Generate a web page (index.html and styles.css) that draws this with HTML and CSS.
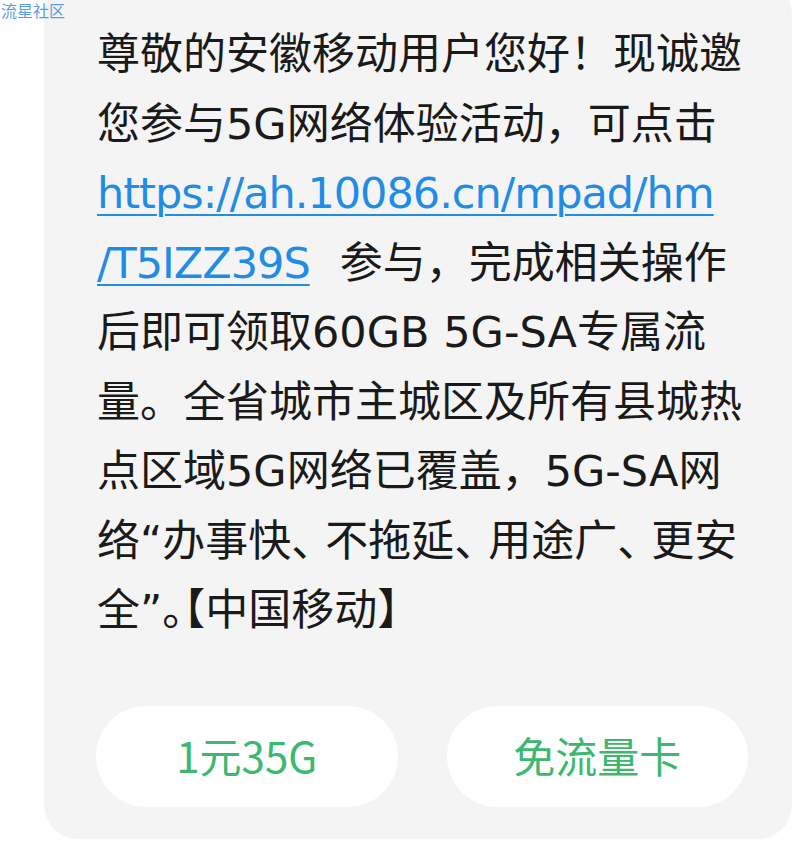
FILE: index.html
```html
<!DOCTYPE html>
<html lang="zh-CN">
<head>
    <meta charset="UTF-8">
    <meta name="viewport" content="width=device-width, initial-scale=1.0">
    <title>短信</title>
    <link rel="stylesheet" href="styles.css">
</head>
<body>

<div class="watermark">流星社区</div>

<div class="bubble">
    <p class="sms-text">
        尊敬的安徽移动用户您好！现诚邀<br>
        您参与5G网络体验活动，可点击<br>
        <a href="#" class="sms-link">https://ah.10086.cn/mpad/hm</a><br>
        <a href="#" class="sms-link">/T5IZZ39S</a><span class="link-gap"></span>参与，完成相关操作<br>
        后即可领取60GB 5G-SA专属流<br>
        量。全省城市主城区及所有县城热<br>
        点区域5G网络已覆盖，5G-SA网<br>
        络“办事快<span class="pause">、</span>不拖延<span class="pause">、</span>用途广<span class="pause">、</span>更安<br>
        全”<span class="half">。【</span>中国移动】
    </p>

    <div class="actions">
        <button class="action-btn">1元35G</button>
        <button class="action-btn">免流量卡</button>
    </div>
</div>

</body>
</html>
```

FILE: styles.css
```css
/* Общие стили */
body {
    font-family: "DejaVu Sans", "Noto Sans CJK SC", sans-serif;
    background-color: #fff;
    color: #1a1a1a;
    margin: 0;
    padding: 0;
    overflow: hidden;
}

/* Водяной знак */
.watermark {
    position: absolute;
    top: 0;
    left: 1px;
    font-family: "Noto Sans CJK SC", sans-serif;
    font-size: 16px;
    line-height: 20px;
    color: #5b9de3;
}

/* Пузырь сообщения */
.bubble {
    margin: -20px 0 0 44px;
    padding: 40px 44px 32px 52px;
    background-color: #f4f4f4;
    border-radius: 34px;
}

.sms-text {
    margin: 0;
    font-size: 43px;
    line-height: 69.5px;
    white-space: nowrap;
    padding: 0 0 2px 1px;
}

.sms-link {
    color: #1f8ce6;
    letter-spacing: -1px;
    text-decoration: underline;
    text-decoration-thickness: 2px;
    text-underline-offset: 6px;
}

.link-gap {
    display: inline-block;
    width: 30px;
}

/* Сжатая пунктуация */
.pause {
    letter-spacing: -9px;
}

.half {
    font-feature-settings: "halt";
}

/* Кнопки */
.actions {
    display: flex;
    gap: 49px;
    margin-top: 58px;
}

.action-btn {
    flex: 1;
    height: 101px;
    padding: 0 0 4px;
    border: none;
    border-radius: 51px;
    background-color: #fff;
    color: #3cb86f;
    font-family: "Noto Sans CJK SC", sans-serif;
    font-size: 42px;
    cursor: pointer;
}
```
